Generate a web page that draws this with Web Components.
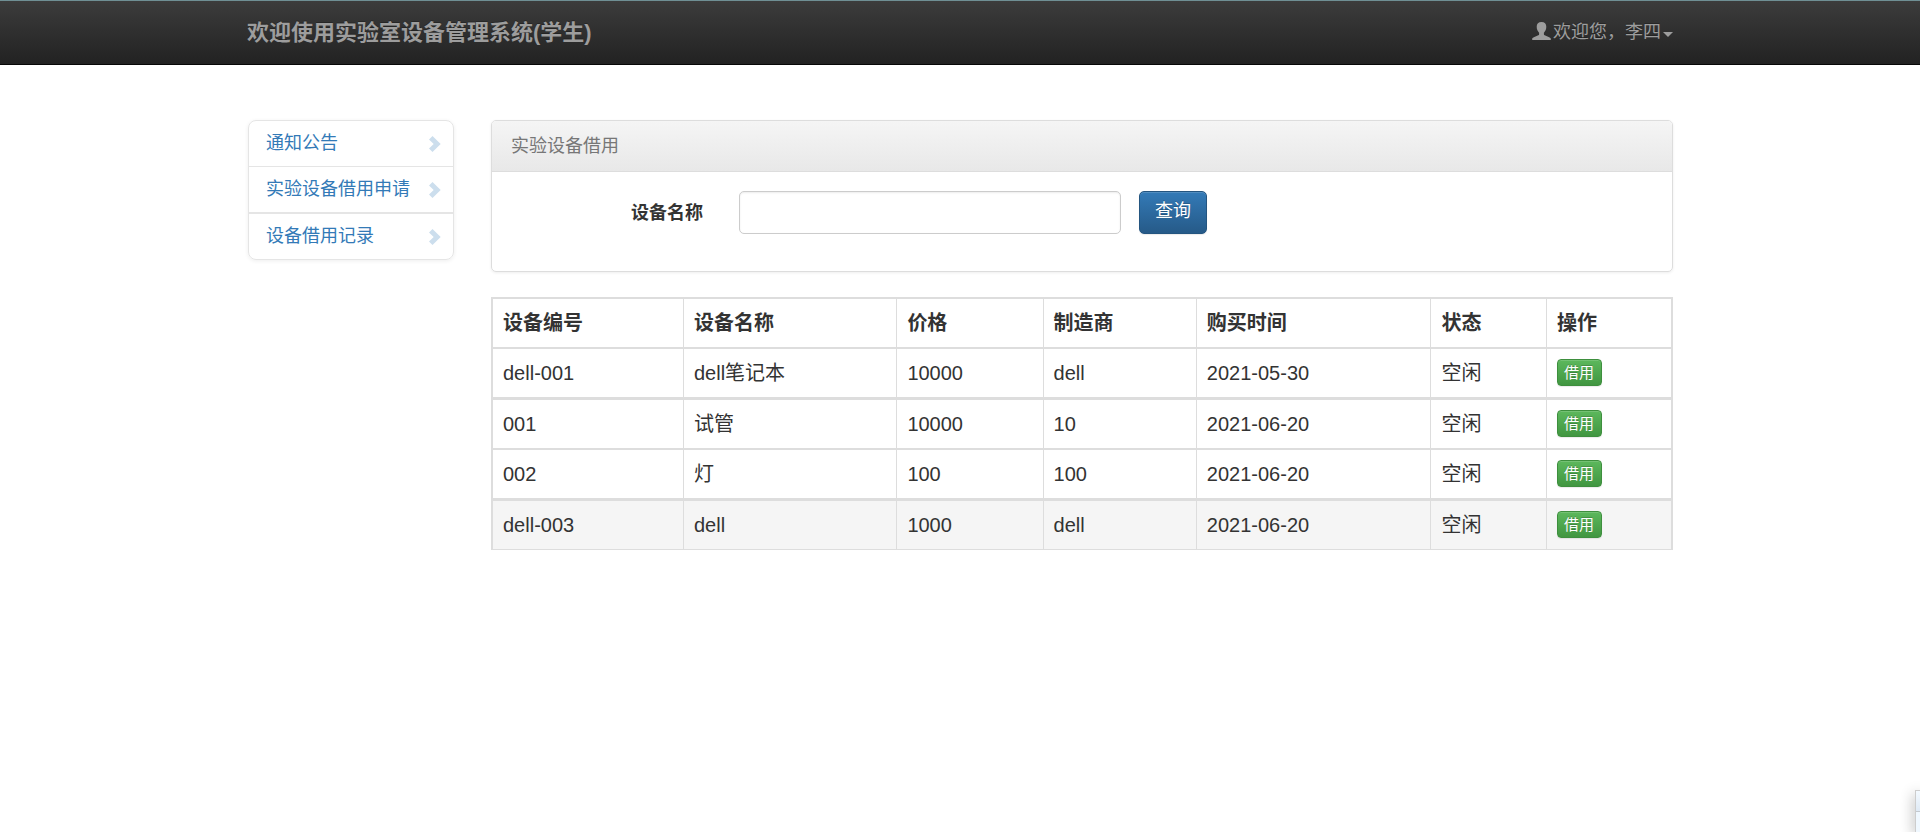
<!DOCTYPE html>
<html lang="zh-CN">
<head>
<meta charset="utf-8">
<title>实验室设备管理系统</title>
<style>
  body {
    margin: 0;
    background: #fff;
    color: #333;
    font: 18px/25px "Liberation Sans", "Noto Sans CJK SC", sans-serif;
  }
</style>
</head>
<body>
<lab-app></lab-app>

<template id="tpl-app">
  <style>
    :host { display: block; position: relative; min-height: 100vh; overflow: hidden; }
    .layout {
      display: grid;
      grid-template-columns: 207px minmax(0, 1fr);
      gap: 37px;
      align-items: start;
      max-width: 1426px;
      margin: 55px auto 0;
    }
    lab-menu { margin-left: 1px; }
    main { display: grid; gap: 25px; }
    .edge {
      position: absolute; right: 0; bottom: 0;
      width: 5px; height: 42px; box-sizing: border-box;
      border: solid #cdcdcd; border-width: 1px 0 0 1px;
      background: linear-gradient(#f4faff, #dfeaf5 20px, #c4c9cf 20px, #c4c9cf 21px, #f0f8ff 21px);
      box-shadow: 0 4px 14px rgba(0, 0, 0, .45);
    }
  </style>
  <lab-navbar user="李四">欢迎使用实验室设备管理系统(学生)</lab-navbar>
  <div class="layout">
    <lab-menu>
      <lab-menu-item href="#notice">通知公告</lab-menu-item>
      <lab-menu-item href="#apply">实验设备借用申请</lab-menu-item>
      <lab-menu-item href="#records" strong>设备借用记录</lab-menu-item>
    </lab-menu>
    <main>
      <lab-panel>
        <span slot="title">实验设备借用</span>
        <lab-search></lab-search>
      </lab-panel>
      <lab-table></lab-table>
    </main>
  </div>
  <div class="edge"></div>
</template>

<template id="tpl-navbar">
  <style>
    :host {
      display: block;
      color: #9d9d9d;
      background: linear-gradient(#3c3c3c, #222);
      border-top: 1px solid #6f8f94;
      border-bottom: 1px solid #080808;
      text-shadow: 0 -1px 0 rgba(0, 0, 0, .25);
    }
    nav {
      display: flex; justify-content: space-between; align-items: center;
      max-width: 1426px; height: 63px; margin: 0 auto;
    }
    a { color: inherit; text-decoration: none; }
    .brand { font-size: 22px; font-weight: bold; }
    .user { display: flex; align-items: center; }
    .user svg { width: 19px; height: 18px; margin: 0 2px 3px 0; }
    .caret {
      border: 5px solid transparent; border-top-color: #9d9d9d; border-bottom: 0;
      margin: 3px 0 0 2px;
    }
  </style>
  <nav>
    <a class="brand" href="#home"><slot></slot></a>
    <a class="user" href="#user"><svg viewBox="0 0 19 18" fill="#9d9d9d" aria-hidden="true"><path d="M9.500 0C12.700 0 14.300 2 14.300 4.800C14.300 7.500 13.200 9.500 11.900 10.700V12.200C11.900 12.800 12.200 13 12.700 13.200L17.200 15.200C18.400 15.800 18.800 16.300 18.800 17V18H.2V17C.2 16.300.6 15.800 1.800 15.200L6.300 13.200C6.800 13 7.100 12.800 7.100 12.200V10.700C5.800 9.500 4.700 7.500 4.700 4.800C4.700 2 6.300 0 9.500 0Z"/></svg><span id="name"></span><i class="caret"></i></a>
  </nav>
</template>

<template id="tpl-menu">
  <style>
    :host {
      display: block; overflow: hidden;
      border: 1px solid #e5e5e5; border-radius: 8px;
      box-shadow: 0 1px 4px rgba(0, 0, 0, .07);
    }
  </style>
  <nav><slot></slot></nav>
</template>

<template id="tpl-menu-item">
  <style>
    :host { display: block; border-top: 1px solid #e5e5e5; }
    :host(:first-child) { border-top: 0; }
    :host([strong]) { border-top-width: 2px; }
    a {
      display: flex; justify-content: space-between; align-items: center;
      padding: 10px 12px 10px 17px;
      color: #337ab7; text-decoration: none; white-space: nowrap;
    }
    svg { width: 12px; height: 16px; }
  </style>
  <a><slot></slot><svg viewBox="0 0 12 16" fill="#ccdeed" aria-hidden="true"><path d="M3.500 0L11.700 8L3.500 16L0 12.600L4.700 8L0 3.400Z"/></svg></a>
</template>

<template id="tpl-panel">
  <style>
    :host {
      display: block; border: 1px solid #ddd; border-radius: 5px;
      box-shadow: 0 1px 3px rgba(0, 0, 0, .07);
    }
    header {
      padding: 13px 19px 12px; color: #777;
      border-bottom: 1px solid #ddd; border-radius: 4px 4px 0 0;
      background: linear-gradient(#f5f5f5, #e8e8e8);
    }
    section { padding: 19px 19px 37px; }
  </style>
  <header><slot name="title"></slot></header>
  <section><slot></slot></section>
</template>

<template id="tpl-search">
  <style>
    :host { display: block; }
    form {
      display: grid; align-items: center; gap: 18px; margin: 0;
      grid-template-columns: 210px minmax(0, 382px) auto;
      justify-content: start;
    }
    label { text-align: right; font-weight: bold; padding: 2px 18px 0 0; }
    input, button { box-sizing: border-box; height: 43px; font: inherit; border-radius: 5px; }
    input {
      width: 100%; padding: 8px 15px; color: #555; background: #fff;
      border: 1px solid #ccc; box-shadow: inset 0 1px 2px rgba(0, 0, 0, .08);
    }
    button {
      padding: 0 15px 2px; color: #fff;
      border: 1px solid #245580;
      background: linear-gradient(#337ab7, #265a88);
      box-shadow: inset 0 1px 0 rgba(255, 255, 255, .15), 0 1px 1px rgba(0, 0, 0, .08);
      text-shadow: 0 -1px 0 rgba(0, 0, 0, .2);
    }
  </style>
  <form>
    <label for="device">设备名称</label>
    <input id="device" type="text">
    <button type="button">查询</button>
  </form>
</template>

<template id="tpl-table">
  <style>
    :host { display: block; font-size: 20px; line-height: 28px; }
    table {
      width: 100%; table-layout: fixed; border-collapse: separate; border-spacing: 0;
      border: solid #ddd; border-width: 0 2px 1px 1px; box-sizing: border-box;
    }
    th, td { padding: 10px; text-align: left; border: solid #ddd; border-width: 2px 0 0 1px; white-space: nowrap; }
    tbody tr:nth-child(even) td { border-top-width: 3px; }
    tbody tr:last-child td { background: #f5f5f5; }
    button {
      display: block; box-sizing: border-box; height: 27px; padding: 0 7px 1px 6px;
      font: inherit; font-size: 15px; line-height: 23px; color: #fff;
      border: 1px solid #3e8f3e; border-radius: 4px;
      background: linear-gradient(#5cb85c, #419641);
      box-shadow: inset 0 1px 0 rgba(255, 255, 255, .15), 0 1px 1px rgba(0, 0, 0, .08);
      text-shadow: 0 -1px 0 rgba(0, 0, 0, .2);
    }
    td:last-child { padding-bottom: 11px; line-height: 0; }
    .c1 { width: 16.2%; }
    .c2 { width: 18.1%; }
    .c3 { width: 12.4%; }
    .c4 { width: 13%; }
    .c5 { width: 19.9%; }
    .c6 { width: 9.8%; }
  </style>
  <table>
    <colgroup>
      <col class="c1"><col class="c2"><col class="c3"><col class="c4"><col class="c5"><col class="c6"><col>
    </colgroup>
    <thead><tr></tr></thead>
    <tbody></tbody>
  </table>
</template>

<script>
  class LabElement extends HTMLElement {
    constructor() {
      super();
      const tpl = document.getElementById(this.constructor.template);
      this.attachShadow({ mode: "open" }).append(document.importNode(tpl.content, true));
    }
  }

  customElements.define("lab-navbar", class extends LabElement {
    static template = "tpl-navbar";
    connectedCallback() {
      this.shadowRoot.getElementById("name").textContent = "欢迎您，" + this.getAttribute("user");
    }
  });
  customElements.define("lab-menu", class extends LabElement {
    static template = "tpl-menu";
  });
  customElements.define("lab-menu-item", class extends LabElement {
    static template = "tpl-menu-item";
    connectedCallback() {
      this.shadowRoot.querySelector("a").href = this.getAttribute("href");
    }
  });
  customElements.define("lab-panel", class extends LabElement {
    static template = "tpl-panel";
  });
  customElements.define("lab-search", class extends LabElement {
    static template = "tpl-search";
  });
  customElements.define("lab-table", class extends LabElement {
    static template = "tpl-table";
    connectedCallback() {
      const heads = ["设备编号", "设备名称", "价格", "制造商", "购买时间", "状态", "操作"];
      const rows = [
        ["dell-001", "dell笔记本", "10000", "dell", "2021-05-30", "空闲"],
        ["001", "试管", "10000", "10", "2021-06-20", "空闲"],
        ["002", "灯", "100", "100", "2021-06-20", "空闲"],
        ["dell-003", "dell", "1000", "dell", "2021-06-20", "空闲"]
      ];
      this.shadowRoot.querySelector("thead tr").innerHTML =
        heads.map(h => `<th scope="col">${h}</th>`).join("");
      this.shadowRoot.querySelector("tbody").innerHTML = rows.map(r =>
        `<tr>${r.map(c => `<td>${c}</td>`).join("")}<td><button type="button">借用</button></td></tr>`
      ).join("");
    }
  });
  customElements.define("lab-app", class extends LabElement {
    static template = "tpl-app";
  });
</script>
</body>
</html>
